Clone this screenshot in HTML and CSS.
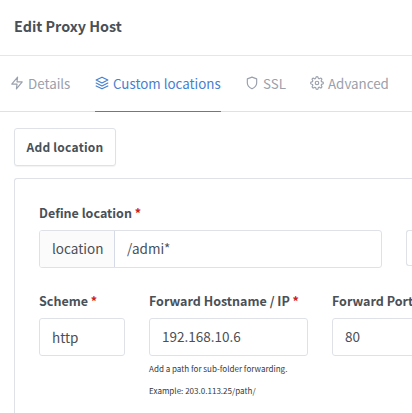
FILE: index.html
```html
<!DOCTYPE html>
<html lang="en">
<head>
<meta charset="utf-8">
<title>Edit Proxy Host</title>
<link rel="stylesheet" href="styles.css">
</head>
<body>
<header class="modal-header"><h5 class="modal-title">Edit Proxy Host</h5></header>
<nav class="tabs">
  <a class="tab tab-details"><svg class="icon" viewBox="0 0 24 24"><path d="M13 2 3 14h9l-1 8 10-12h-9l1-8z"/></svg><span>Details</span></a>
  <a class="tab tab-locations active"><svg class="icon" viewBox="0 0 24 24"><path d="M12 2 2 7l10 5 10-5-10-5zM2 17l10 5 10-5M2 12l10 5 10-5"/></svg><span>Custom locations</span></a>
  <a class="tab tab-ssl"><svg class="icon" viewBox="0 0 24 24"><path d="M12 22s8-4 8-10V5l-8-3-8 3v7c0 6 8 10 8 10z"/></svg><span>SSL</span></a>
  <a class="tab tab-advanced"><svg class="icon" viewBox="0 0 24 24"><circle cx="12" cy="12" r="3"/><path d="M19.4 15a1.65 1.65 0 0 0 .33 1.82l.06.06a2 2 0 0 1-2.83 2.83l-.06-.06a1.65 1.65 0 0 0-1.82-.33 1.65 1.65 0 0 0-1 1.51V21a2 2 0 0 1-4 0v-.09A1.65 1.65 0 0 0 9 19.4a1.65 1.65 0 0 0-1.82.33l-.06.06a2 2 0 0 1-2.83-2.83l.06-.06a1.65 1.65 0 0 0 .33-1.82 1.65 1.65 0 0 0-1.51-1H3a2 2 0 0 1 0-4h.09A1.65 1.65 0 0 0 4.6 9a1.65 1.65 0 0 0-.33-1.82l-.06-.06a2 2 0 0 1 2.83-2.83l.06.06a1.65 1.65 0 0 0 1.82.33H9a1.65 1.65 0 0 0 1-1.51V3a2 2 0 0 1 4 0v.09a1.65 1.65 0 0 0 1 1.51 1.65 1.65 0 0 0 1.82-.33l.06-.06a2 2 0 0 1 2.83 2.83l-.06.06a1.65 1.65 0 0 0-.33 1.82V9a1.65 1.65 0 0 0 1.51 1H21a2 2 0 0 1 0 4h-.09a1.65 1.65 0 0 0-1.51 1z"/></svg><span>Advanced</span></a>
</nav>
<main class="content">
  <button class="btn">Add location</button>
  <section class="card">
    <div class="row row-location">
      <div class="field field-location">
        <label class="label">Define location <span class="req">*</span></label>
        <div class="group"><span class="addon">location</span><div class="control">/admi*</div></div>
      </div>
      <div class="toggle"></div>
    </div>
    <div class="row">
      <div class="field field-scheme">
        <label class="label">Scheme <span class="req">*</span></label>
        <div class="input select">http</div>
      </div>
      <div class="field field-host">
        <label class="label">Forward Hostname / IP <span class="req">*</span></label>
        <div class="input">192.168.10.6</div>
        <p class="hint">Add a path for sub-folder forwarding.</p>
        <p class="hint">Example: 203.0.113.25/path/</p>
      </div>
      <div class="field field-port">
        <label class="label">Forward Port</label>
        <div class="input">80</div>
      </div>
    </div>
  </section>
</main>
</body>
</html>
```
FILE: styles.css
```css
* { box-sizing: border-box; }
html, body { height: 100%; overflow: hidden; }
body {
  display: flex;
  flex-direction: column;
  margin: 0;
  background: #fff;
  color: #495057;
  font-family: "Noto Sans CJK SC", "Open Sans", sans-serif;
  font-size: 13.5px;
  line-height: 22px;
}
.modal-header { flex: none; height: 56px; padding: 14px 14px; border-bottom: 1px solid #e4e6e9; }
.modal-title { margin: 0; font-size: 14.35px; line-height: 24px; font-weight: 700; white-space: nowrap; }
.tabs { display: flex; flex: none; height: 56px; padding-left: 10px; border-bottom: 1px solid #dee2e6; color: #9aa0ac; }
.tab { display: flex; flex: none; height: 56px; padding-top: 17px; gap: 4px; white-space: nowrap; font-size: 13.35px; border-bottom: 1px solid transparent; }
.tab-details { width: 61px; margin-right: 24px; }
.tab-locations { width: 126px; margin-right: 24px; }
.tab-ssl { width: 41px; margin-right: 24px; }
.active { color: #467fcf; border-bottom-color: #467fcf; }
.icon { flex: none; width: 14px; height: 14px; margin-top: 3px; fill: none; stroke: currentColor; stroke-width: 2; stroke-linecap: round; stroke-linejoin: round; }
.content { display: flex; flex-direction: column; flex: 1; min-height: 0; padding: 16px 0 0 14px; }
.btn {
  flex: none; width: 102px; height: 38px; padding: 0;
  border: 1px solid #dee2e8; border-radius: 3px; background: #fff;
  box-shadow: 0 1px 1px rgba(0, 0, 0, .05);
  color: #495057; font: 700 12px/34px "Noto Sans CJK SC", sans-serif; letter-spacing: .24px;
}
.card { flex: 1; min-height: 0; margin-top: 12px; padding: 24px 0 0 24px; border: solid #dee2e8; border-width: 1px 0 0 1px; border-radius: 3px 0 0 0; overflow: hidden; }
.row { display: flex; gap: 24px; }
.row-location { height: 88px; }
.field { flex: none; }
.field-location { width: 343px; }
.field-scheme { width: 86px; }
.field-host { width: 159px; }
.field-port { width: 159px; }
.label { display: block; height: 27px; line-height: 20px; font-weight: 700; font-size: 12.5px; white-space: nowrap; }
.req { color: #cd201f; }
.group { display: flex; height: 38px; border: 1px solid #dee2e8; border-radius: 3px; line-height: 35px; overflow: hidden; }
.addon { width: 75px; padding-left: 12px; border-right: 1px solid #d6dae6; background: #fbfbfc; }
.control { padding-left: 12px; }
.toggle { flex: 1; height: 36px; margin-top: 27px; border: solid #dee2e8; border-width: 1px 0 1px 1px; border-radius: 3px 0 0 3px; }
.input { height: 38px; padding-left: 12px; border: 1px solid #dee2e8; border-radius: 3px; line-height: 34px; }
.select { line-height: 36px; }
.hint { margin: 2px 0 0; line-height: 22px; font-size: 8.05px; color: #343a40; white-space: nowrap; }
.hint + .hint { margin-top: 0; }
```
